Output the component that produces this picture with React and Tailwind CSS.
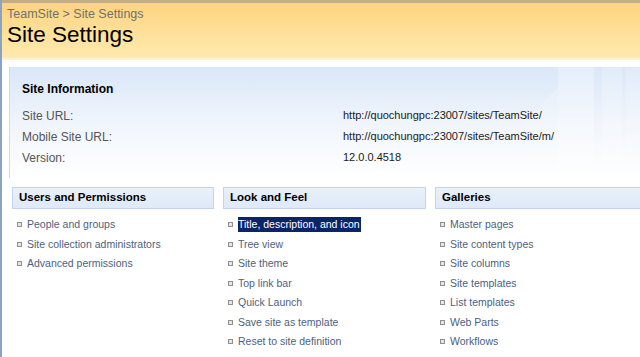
import React from "react";

const users = ["People and groups", "Site collection administrators", "Advanced permissions"];
const look = [
  "Title, description, and icon",
  "Tree view",
  "Site theme",
  "Top link bar",
  "Quick Launch",
  "Save site as template",
  "Reset to site definition",
];
const galleries = [
  "Master pages",
  "Site content types",
  "Site columns",
  "Site templates",
  "List templates",
  "Web Parts",
  "Workflows",
];

function Section({ title, items, highlight }) {
  return (
    <div className="flex flex-col">
      <div className="h-[22px] flex items-center pl-[6px] border border-[#c3d5ec] bg-gradient-to-b from-[#e9f0fb] to-[#dfe9f8] text-[11.5px] font-bold text-black leading-none">
        {title}
      </div>
      <div className="flex flex-col pt-[6px]">
        {items.map((t, i) => (
          <div key={t} className="h-[19.5px] flex items-center pl-[5px]">
            <span className="w-[5px] h-[5px] border border-[#8f8f8f] bg-[#e6e6e6] mr-[5px] shrink-0" />
            <span
              className={
                "text-[10.5px] leading-[15px] " +
                (highlight === i ? "bg-[#0a246a] text-white pr-[1px]" : "text-[#4d5f80]")
              }
            >
              {t}
            </span>
          </div>
        ))}
      </div>
    </div>
  );
}

export default function App() {
  return (
    <div className="w-[640px] h-[357px] overflow-hidden bg-white border-l-[2px] border-[#8aa4c0] font-['Liberation_Sans',Arial,sans-serif]">
      <div className="h-[58px] border-t-[3px] border-[#c1ae84] bg-gradient-to-b from-[#fdd47f] to-[#feeaae] pl-[5px] pt-[4px]">
        <div className="text-[12.5px] leading-[14px] text-[#707070]">TeamSite &gt; Site Settings</div>
        <div className="text-[22.5px] leading-[26px] text-black mt-[1px]">Site Settings</div>
      </div>
      <div className="h-[2px] bg-[#fff3cf]" />
      <div className="h-[7px] bg-white" />
      <div className="relative ml-[7px] h-[111px] border-l border-[#c9d9ef] bg-gradient-to-b from-[#d9e7f8] via-[#f0f5fc] to-white pl-[12px] pt-[15px] overflow-hidden">
        <svg className="absolute right-0 top-0" width="120" height="111" viewBox="0 0 120 111">
          <rect x="38" y="0" width="36" height="111" fill="#ffffff" opacity="0.3" />
          <rect x="82" y="0" width="20" height="111" fill="#ffffff" opacity="0.22" />
          <rect x="106" y="0" width="14" height="111" fill="#ffffff" opacity="0.2" />
          <polygon points="0,60 38,20 38,111 0,111" fill="#ffffff" opacity="0.18" />
        </svg>
        <div className="relative text-[12px] leading-[14px] font-bold text-black">Site Information</div>
        <div className="relative mt-[9px] flex flex-col">
          {[
            ["Site URL:", "http://quochungpc:23007/sites/TeamSite/"],
            ["Mobile Site URL:", "http://quochungpc:23007/sites/TeamSite/m/"],
            ["Version:", "12.0.0.4518"],
          ].map(([l, v]) => (
            <div key={l} className="h-[21px] flex items-center">
              <span className="w-[321px] text-[12px] text-[#555555]">{l}</span>
              <span className="text-[11px] text-[#1a1a1a]">{v}</span>
            </div>
          ))}
        </div>
      </div>
      <div className="grid grid-cols-[202px_203px_210px] gap-x-[9px] ml-[10px] mt-[9px]">
        <Section title="Users and Permissions" items={users} />
        <Section title="Look and Feel" items={look} highlight={0} />
        <Section title="Galleries" items={galleries} />
      </div>
    </div>
  );
}
